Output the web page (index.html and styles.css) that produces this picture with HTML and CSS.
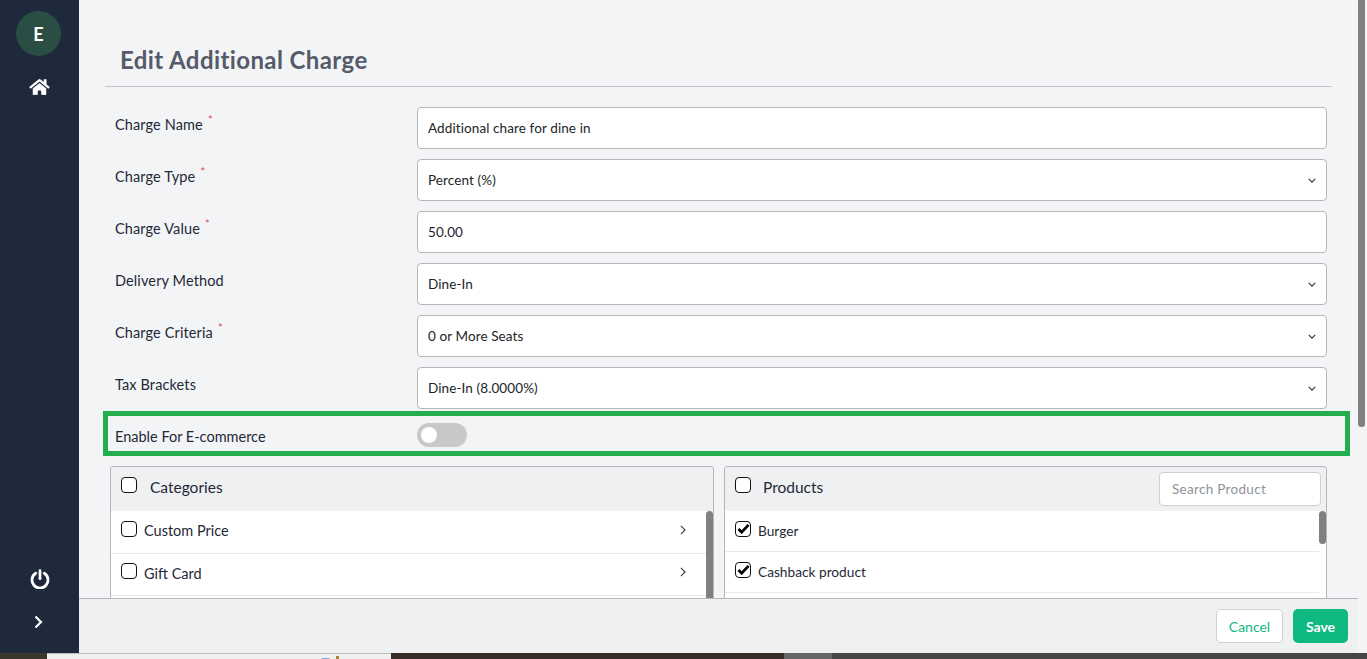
FILE: index.html
```html
<!DOCTYPE html>
<html lang="en">
<head>
<meta charset="utf-8">
<title>Edit Additional Charge</title>
<link rel="stylesheet" href="styles.css">
</head>
<body>
<div class="app">
  <aside class="sidebar">
    <div class="avatar">E</div>
    <svg class="home" viewBox="0 0 576 512" width="21" height="18"><path fill="#fff" d="M280.4 148.3 96 300.1V464a16 16 0 0 0 16 16l112-.3a16 16 0 0 0 15.9-16V368a16 16 0 0 1 16-16h64a16 16 0 0 1 16 16v95.6a16 16 0 0 0 16 16.1l112 .3a16 16 0 0 0 16-16V300L295.700 148.300a12.200 12.200 0 0 0-15.300 0zM571.600 251.500 488 182.600V44.100a12 12 0 0 0-12-12h-56a12 12 0 0 0-12 12v72.600L318.500 43a48 48 0 0 0-61 0L4.300 251.500a12 12 0 0 0-1.600 16.900l25.500 31A12 12 0 0 0 45.200 301l235.200-193.700a12.200 12.200 0 0 1 15.300 0L530.900 301a12 12 0 0 0 16.900-1.600l25.500-31a12 12 0 0 0-1.700-16.900z"/></svg>
    <div class="sidebar-spacer"></div>
    <svg class="power" viewBox="0 0 20 20" width="20" height="20"><path fill="none" stroke="#fff" stroke-width="2.800" stroke-linecap="round" d="M5.700 4.300a8 8 0 1 0 8.600 0M10 1.700v8"/></svg>
    <svg class="expand" viewBox="0 0 10 14" width="10" height="14"><path fill="none" stroke="#fff" stroke-width="2.200" d="M1.500 1.500 7 7l-5.500 5.500"/></svg>
  </aside>
  <div class="workspace">
    <main class="content">
      <h1 class="title">Edit Additional Charge</h1>
      <form class="form">
        <div class="row"><label class="label">Charge Name <sup class="req">*</sup></label><div class="field">Additional chare for dine in</div></div>
        <div class="row"><label class="label">Charge Type <sup class="req">*</sup></label><div class="field select">Percent (%)<svg class="chev" viewBox="0 0 10 6" width="8" height="5"><path d="M1 1l4 4 4-4" fill="none" stroke="#343a40" stroke-width="1.500"/></svg></div></div>
        <div class="row"><label class="label">Charge Value <sup class="req">*</sup></label><div class="field">50.00</div></div>
        <div class="row"><label class="label">Delivery Method</label><div class="field select">Dine-In<svg class="chev" viewBox="0 0 10 6" width="8" height="5"><path d="M1 1l4 4 4-4" fill="none" stroke="#343a40" stroke-width="1.500"/></svg></div></div>
        <div class="row"><label class="label">Charge Criteria <sup class="req">*</sup></label><div class="field select">0 or More Seats<svg class="chev" viewBox="0 0 10 6" width="8" height="5"><path d="M1 1l4 4 4-4" fill="none" stroke="#343a40" stroke-width="1.500"/></svg></div></div>
        <div class="row"><label class="label">Tax Brackets</label><div class="field select">Dine-In (8.0000%)<svg class="chev" viewBox="0 0 10 6" width="8" height="5"><path d="M1 1l4 4 4-4" fill="none" stroke="#343a40" stroke-width="1.500"/></svg></div></div>
        <div class="row-highlight"><label class="label">Enable For E-commerce</label><span class="toggle"><span class="knob"></span></span></div>
        <div class="panels">
          <section class="panel">
            <header class="panel-head"><span class="check"></span><span class="panel-title">Categories</span></header>
            <div class="panel-body">
              <div class="item"><span class="check"></span><span class="item-name">Custom Price</span><svg class="arrow" viewBox="0 0 7 12" width="6" height="10"><path d="M1 1l5 5-5 5" fill="none" stroke="#343a40" stroke-width="1.300"/></svg></div>
              <div class="item"><span class="check"></span><span class="item-name">Gift Card</span><svg class="arrow" viewBox="0 0 7 12" width="6" height="10"><path d="M1 1l5 5-5 5" fill="none" stroke="#343a40" stroke-width="1.300"/></svg></div>
              <div class="item"></div>
              <span class="scroll-thumb cat-thumb"></span>
            </div>
          </section>
          <section class="panel">
            <header class="panel-head"><span class="check"></span><span class="panel-title prod">Products</span><div class="search">Search Product</div></header>
            <div class="panel-body">
              <div class="item prod-item"><span class="check"><svg viewBox="0 0 14 12" width="13" height="11"><path d="M1.500 6.500 5 10l7.500-8" fill="none" stroke="#000" stroke-width="3"/></svg></span><span class="item-name tight">Burger</span></div>
              <div class="item prod-item"><span class="check"><svg viewBox="0 0 14 12" width="13" height="11"><path d="M1.500 6.500 5 10l7.500-8" fill="none" stroke="#000" stroke-width="3"/></svg></span><span class="item-name tight">Cashback product</span></div>
              <div class="item prod-item"></div>
              <span class="scroll-thumb prod-thumb"></span>
            </div>
          </section>
        </div>
      </form>
      <span class="page-thumb"></span>
    </main>
    <footer class="footer">
      <button class="btn cancel" type="button">Cancel</button>
      <button class="btn save" type="button">Save</button>
    </footer>
  </div>
</div>
<div class="strip">
  <span class="s1"></span><span class="s2"><span class="tray-blue"></span><span class="tray-gold"></span></span><span class="s3"></span><span class="s4"></span><span class="s5"></span>
</div>
</body>
</html>
```
FILE: styles.css
```css
* { box-sizing: border-box; }
html, body { margin: 0; height: 100%; overflow: hidden; }
body { font-family: "Lato", "Liberation Sans", sans-serif; color: #1f2937; font-size: 14px; background: #f3f4f6; }
.app { display: flex; height: 653px; }
.sidebar { width: 79px; flex: none; background: #1e293b; display: flex; flex-direction: column; align-items: center; padding: 11px 0 24px; }
.avatar { width: 45px; height: 45px; margin-right: 2px; border-radius: 50%; background: #2b4e44; color: #fff; font-weight: 700; font-size: 18px; display: flex; align-items: center; justify-content: center; }
.home { margin-top: 22px; }
.sidebar-spacer { flex: 1; }
.power { margin-bottom: 26px; margin-left: 1px; }
.expand { margin-right: 2px; }
.workspace { flex: 1; min-width: 0; display: flex; flex-direction: column; background: #f3f4f6; }
.content { flex: 1; min-height: 0; overflow: hidden; position: relative; padding: 37px 35px 0 26px; }
.title { margin: 0; padding: 0 0 8px 15px; height: 50px; font-size: 24px; line-height: 45px; font-weight: 700; letter-spacing: .4px; color: #555b69; border-bottom: 1px solid #c4c6c9; }
.form { display: flex; flex-direction: column; margin: 20px 5px 0 0; }
.row { display: flex; height: 42px; margin-bottom: 10px; }
.label { width: 312px; flex: none; padding: 9px 0 0 10px; font-size: 14.500px; line-height: 18px; letter-spacing: .12px; color: #1f2937; }
.req { color: #d9536a; font-size: 12px; line-height: 0; margin-left: 1px; }
.field { flex: 1; height: 42px; background: #fff; border: 1px solid #b4b6ba; border-radius: 4px; padding: 0 10px; display: flex; align-items: center; font-size: 13.500px; letter-spacing: .1px; color: #212529; position: relative; }
.field.select { justify-content: space-between; }
.row-highlight { display: flex; align-items: center; height: 45px; margin: -8px -23px 0 -2px; padding: 0 0 0 7px; border: 5px solid #22ad4e; }
.row-highlight .label { padding: 7px 0 0 0; width: 302px; letter-spacing: 0; }
.toggle { width: 50px; height: 24px; margin-top: 3px; border-radius: 12px; background: #c8c8c8; position: relative; display: block; }
.knob { position: absolute; left: 4px; top: 4px; width: 16px; height: 16px; border-radius: 50%; background: #fff; }
.panels { display: grid; grid-template-columns: 604px 603px; gap: 10px; margin: 10px 0 0 5px; }
.panel { border: 1px solid #b4b6ba; border-bottom: 0; border-radius: 4px 4px 0 0; background: #fff; height: 200px; overflow: hidden; }
.panel-head { height: 44px; background: #eff0f2; display: flex; align-items: flex-start; padding: 10px 5px 0 10px; font-size: 15.500px; }
.panel-title { margin: 0 0 0 13px; line-height: 20px; }
.panel-title.prod { margin-left: 12px; flex: 1; }
.check { width: 16px; height: 16px; flex: none; border: 1.300px solid #111; border-radius: 4px; background: #fff; display: inline-flex; align-items: center; justify-content: center; }
.search { width: 162px; height: 34px; margin-top: -5px; border: 1px solid #cfd0d3; border-radius: 4px; background: #fff; display: flex; align-items: center; padding-left: 12px; color: #8e949c; font-size: 13.500px; letter-spacing: .3px; }
.panel-body { position: relative; }
.item { height: 42.500px; padding: 0 10px; display: flex; align-items: center; border-bottom: 1px solid #e8e9ea; font-size: 14.500px; }
.item .check { margin-top: -6px; }
.prod-item { height: 41px; margin-right: 7px; font-size: 13.700px; }
.prod-item .check { margin-top: -5px; }
.item-name { margin: -2px 0 0 7px; flex: 1; }
.arrow { margin: -4px 17px 0 0; }
.scroll-thumb { position: absolute; right: 0; top: 0; width: 7px; background: #808080; border-radius: 4px; }
.cat-thumb { height: 120px; }
.prod-thumb { height: 33px; }
.page-thumb { position: absolute; right: 2px; top: 0; width: 7px; height: 427px; background: #808080; border-radius: 0 0 3px 3px; }
.footer { height: 55px; flex: none; margin-right: 9px; background: #eff0f2; border-top: 1px solid #b4b6ba; display: flex; justify-content: flex-end; align-items: center; gap: 10px; padding: 0 10px 0 0; }
.btn { height: 34px; border-radius: 5px; font-family: inherit; font-size: 14px; padding: 0; }
.cancel { width: 67px; border: 1px solid #cfd0d3; background: #fff; color: #10b981; }
.save { width: 55px; border: 0; background: #10b981; color: #fff; font-weight: 700; }
.strip { display: flex; height: 6px; }
.strip > span { display: block; }
.s1 { width: 47px; background: #3a382c; }
.s2 { width: 344px; background: #f0f0f0; border-top: 1px solid #bbb; position: relative; }
.tray-blue { position: absolute; left: 274px; top: 4px; width: 9px; height: 2px; background: #7f9fe0; border-radius: 3px 3px 0 0; }
.tray-gold { position: absolute; left: 289px; top: 2px; width: 3px; height: 4px; background: #a8852f; }
.s3 { width: 393px; background: #3a2c26; }
.s4 { width: 48px; background: #666; }
.s5 { flex: 1; background: #464646; }
```
